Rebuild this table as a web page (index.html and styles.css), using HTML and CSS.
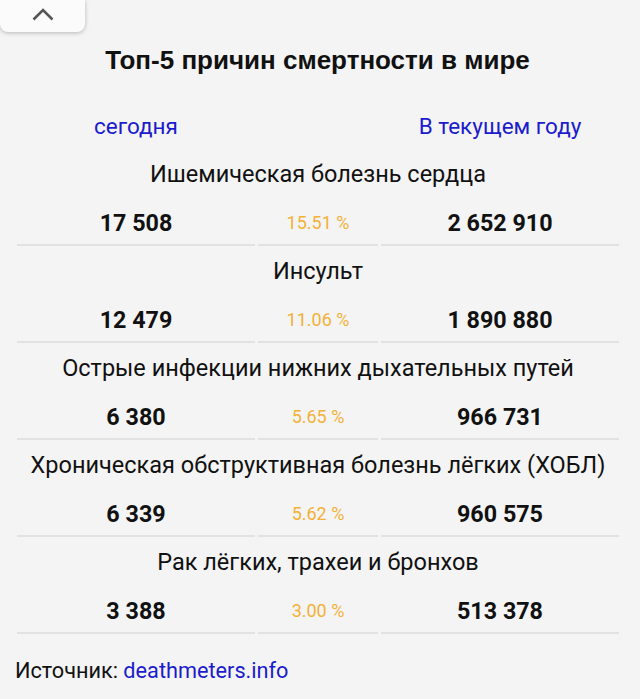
FILE: index.html
```html
<!DOCTYPE html>
<html lang="ru">
<head>
<meta charset="utf-8">
<link rel="stylesheet" href="styles.css">
</head>
<body>
<div class="tab">
  <svg width="24" height="14" viewBox="0 0 24 14"><path d="M2.5 12.5 L12 3 L21.5 12.5" fill="none" stroke="#555" stroke-width="2.6"/></svg>
</div>
<main class="page">
  <h1 class="title">Топ-5 причин смертности в мире</h1>
  <table class="stats">
    <colgroup><col class="c1"><col class="c2"><col class="c3"></colgroup>
    <tr class="head"><td><a>сегодня</a></td><td></td><td><a>В текущем году</a></td></tr>
    <tr class="name"><td colspan="3">Ишемическая болезнь сердца</td></tr>
    <tr class="nums"><td>17 508</td><td class="pct">15.51 %</td><td>2 652 910</td></tr>
    <tr class="name"><td colspan="3">Инсульт</td></tr>
    <tr class="nums"><td>12 479</td><td class="pct">11.06 %</td><td>1 890 880</td></tr>
    <tr class="name"><td colspan="3">Острые инфекции нижних дыхательных путей</td></tr>
    <tr class="nums"><td>6 380</td><td class="pct">5.65 %</td><td>966 731</td></tr>
    <tr class="name"><td colspan="3">Хроническая обструктивная болезнь лёгких (ХОБЛ)</td></tr>
    <tr class="nums"><td>6 339</td><td class="pct">5.62 %</td><td>960 575</td></tr>
    <tr class="name"><td colspan="3">Рак лёгких, трахеи и бронхов</td></tr>
    <tr class="nums"><td>3 388</td><td class="pct">3.00 %</td><td>513 378</td></tr>
  </table>
  <p class="source">Источник: <a>deathmeters.info</a></p>
</main>
</body>
</html>
```
FILE: styles.css
```css
html, body {
  margin: 0;
  padding: 0;
  background: #f4f4f4;
  font-family: Roboto, "Noto Sans", sans-serif;
  color: #111;
}
.tab {
  width: 85px;
  height: 32px;
  background: #fbfbfb;
  border-radius: 0 0 8px 8px;
  box-shadow: 0 1px 4px rgba(0,0,0,0.25);
  display: flex;
  align-items: center;
  justify-content: center;
}
.tab svg { margin-top: -5px; }
.page {
  padding: 0 20px 0 15px;
}
.title {
  font-family: "Liberation Sans", Arial, sans-serif;
  font-weight: bold;
  font-size: 26px;
  text-align: center;
  margin: 13px 0 0;
  line-height: 30px;
}
.stats {
  width: 608px;
  margin-left: -1px;
  border-collapse: separate;
  border-spacing: 3px 0;
  margin-top: 28px;
}
.c1, .c3 { width: 238px; }
.c2 { width: 120px; }
.stats td {
  text-align: center;
  padding: 0;
  vertical-align: middle;
  line-height: 28px;
}
.head td {
  height: 46px;
  font-size: 22.5px;
}
.head a { color: #1c1ccc; }
.name td {
  font-size: 23.5px;
  height: 49px;
}
.nums td {
  height: 43px;
  padding-top: 3px;
  font-size: 23.3px;
  font-weight: bold;
  border-bottom: 2px solid #e2e2e2;
}
.nums td.pct {
  font-size: 18px;
  font-weight: normal;
  color: #f3b138;
}
.source {
  font-size: 21.7px;
  line-height: 26px;
  margin: 24px 0 0;
}
.source a { color: #1c1ccc; }
```
